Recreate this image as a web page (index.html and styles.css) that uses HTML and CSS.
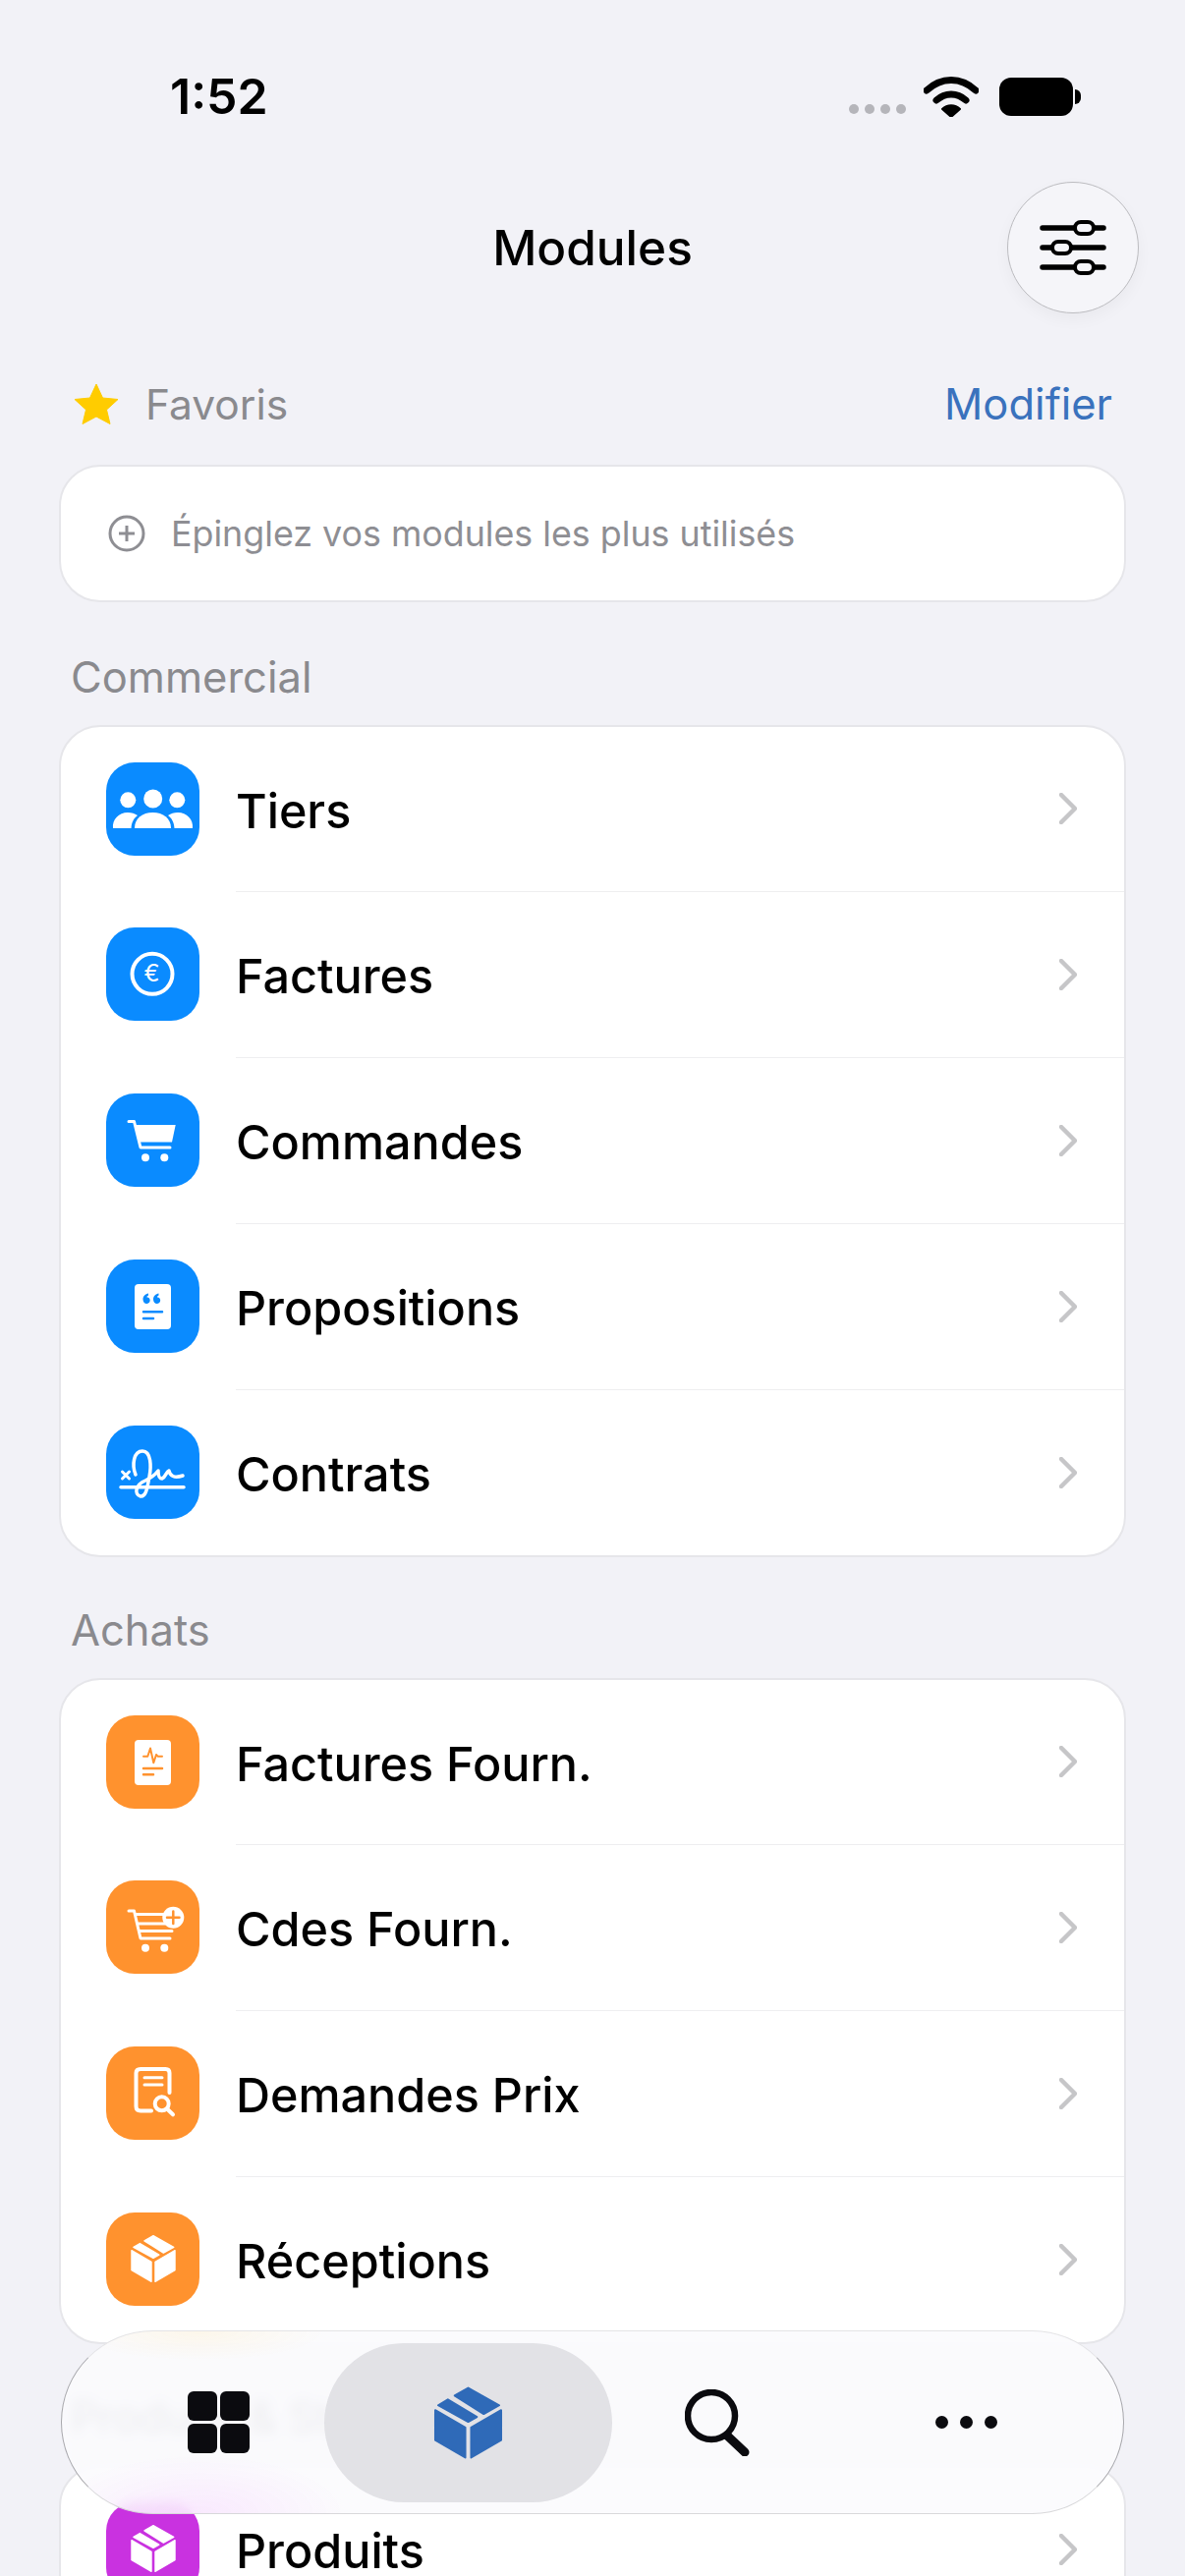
FILE: index.html
```html
<!DOCTYPE html>
<html lang="fr">
<head>
<meta charset="UTF-8">
<meta name="viewport" content="width=device-width, initial-scale=1">
<title>Modules</title>
<link rel="stylesheet" href="styles.css">
</head>
<body>
<svg class="sprites" width="0" height="0" aria-hidden="true">
  <symbol id="box" viewBox="-2 -2 74 78">
    <path d="M35 1 67 19 51 28 21 9Z"/>
    <path d="M14 13 44 31 35 36 4 19Z"/>
    <path d="M1 24 32 42V73L1 55Z"/>
    <path d="M38 42 69 24V55L38 73Z"/>
  </symbol>
  <symbol id="chevron" viewBox="0 0 18 32">
    <path d="M2 2 16 16 2 30"/>
  </symbol>
</svg>

<header class="status-bar">
  <span class="time">1:52</span>
  <div class="status-icons">
    <div class="signal-dots"><i></i><i></i><i></i><i></i></div>
    <svg class="wifi" viewBox="0 0 56 42"><path class="wifi-arc" d="M3 15C18 1 38 1 53 15"/><path class="wifi-arc" d="M13 25C22 17 34 17 43 25"/><path class="wifi-dot" d="M28 42 19 34C24 29 32 29 37 34Z"/></svg>
    <div class="battery"><div class="battery-body"></div><div class="battery-nub"></div></div>
  </div>
</header>

<nav class="nav">
  <h1>Modules</h1>
  <button class="filter-btn">
    <svg viewBox="0 0 66 50" width="66" height="50"><path class="slider-line" d="M2 5H64M2 25H64M2 45H64"/><rect class="slider-knob" x="35" y="-1" width="19" height="12" rx="6"/><rect class="slider-knob" x="12" y="19" width="19" height="12" rx="6"/><rect class="slider-knob" x="35" y="39" width="19" height="12" rx="6"/></svg>
  </button>
</nav>

<main>
  <div class="fav-head">
    <div class="fav-title">
      <svg class="star" viewBox="0 0 46 42"><path d="M23 1 29.500 15 45 16.500 33.500 27 37 41.500 23 34 9 41.500 12.500 27 1 16.500 16.500 15Z"/></svg>
      <span>Favoris</span>
    </div>
    <a class="edit-link" href="#">Modifier</a>
  </div>
  <div class="card fav-card">
    <svg class="plus-circle" viewBox="0 0 38 38"><circle cx="19" cy="19" r="17"/><path d="M19 11V27M11 19H27"/></svg>
    <span>Épinglez vos modules les plus utilisés</span>
  </div>

  <h2 class="section-label">Commercial</h2>
  <div class="card list-card">
    <a class="row" href="#">
      <span class="icon blue"><svg viewBox="0 0 95 95">
        <circle cx="47.700" cy="37" r="9.500"/><circle cx="22.300" cy="38.300" r="8"/><circle cx="72.300" cy="38.300" r="8"/>
        <path d="M29 66.700C29 57 37 51 47.500 51S66 57 66 66.700C66 67 65.500 67 65 67H30C29.500 67 29 67 29 66.700Z"/>
        <path d="M7 67C6 58 13 51 22 51 26 51 29 52 32 54 28 57 26 61 25.500 67Z"/>
        <path d="M88 67C89 58 82 51 73 51 69 51 66 52 63 54 67 57 69 61 69.500 67Z"/>
      </svg></span>
      <span class="row-body"><span class="row-label">Tiers</span><svg class="chevron"><use href="#chevron"/></svg></span>
    </a>
    <a class="row" href="#">
      <span class="icon blue"><svg viewBox="0 0 95 95">
        <circle class="line" cx="47" cy="47.300" r="20.500"/>
        <text class="euro" x="46.500" y="55">€</text>
      </svg></span>
      <span class="row-body"><span class="row-label">Factures</span><svg class="chevron"><use href="#chevron"/></svg></span>
    </a>
    <a class="row" href="#">
      <span class="icon blue"><svg viewBox="0 0 95 95">
        <path class="line thin" d="M23 28.500H28.500L35 55H65"/>
        <path d="M29.500 32H70.700L67 49.500H33.500Z"/>
        <circle cx="40" cy="65.300" r="4"/><circle cx="59.300" cy="65.300" r="4"/>
      </svg></span>
      <span class="row-body"><span class="row-label">Commandes</span><svg class="chevron"><use href="#chevron"/></svg></span>
    </a>
    <a class="row" href="#">
      <span class="icon blue"><svg viewBox="0 0 95 95">
        <rect x="29" y="25" width="37" height="46" rx="4"/>
        <path class="cut" d="M37.500 40.500C37.500 37 40 35 43 34.500V36.500C42 37 41.500 37.500 41.500 38.500 45.500 38 46 44.500 41.500 45 39 45 37.500 43 37.500 40.500ZM48 40.500C48 37 50.500 35 53.500 34.500V36.500C52.500 37 52 37.500 52 38.500 56 38 56.500 44.500 52 45 49.500 45 48 43 48 40.500Z"/>
        <path class="cut-line" d="M38 53.300H57M38 60H48"/>
      </svg></span>
      <span class="row-body"><span class="row-label">Propositions</span><svg class="chevron"><use href="#chevron"/></svg></span>
    </a>
    <a class="row" href="#">
      <span class="icon blue"><svg viewBox="0 0 95 95">
        <path class="line thick" d="M15 62.700H79"/>
        <path class="line thin" d="M16.500 47 23.500 54M23.500 47 16.500 54"/>
        <path class="line thick" d="M30 50C26 40 28 26 37 26 46 26 46 42 44 52 42 62 41 73 35 72 28 70 30 60 40 56 48 52 50 50 53 46 53 52 54 54 57 54 61 52 61 47 64 46 65 51 69 54 78 51"/>
      </svg></span>
      <span class="row-body"><span class="row-label">Contrats</span><svg class="chevron"><use href="#chevron"/></svg></span>
    </a>
  </div>

  <h2 class="section-label">Achats</h2>
  <div class="card list-card">
    <a class="row" href="#">
      <span class="icon orange"><svg viewBox="0 0 95 95">
        <rect x="29" y="25" width="37" height="46" rx="4"/>
        <path class="cut-line fine" d="M38 41.700H42.300L45 33.500 48.300 48.300 51 40 52.500 41.700H57"/>
        <path class="cut-line" d="M38 54H57M38 60.300H48"/>
      </svg></span>
      <span class="row-body"><span class="row-label">Factures Fourn.</span><svg class="chevron"><use href="#chevron"/></svg></span>
    </a>
    <a class="row" href="#">
      <span class="icon orange"><svg viewBox="0 0 95 95">
        <path class="line thin" d="M23 31H28.500L35 59H65M29.500 34.500H58M31.500 44H60M33.500 51.500H67"/>
        <circle cx="40" cy="68.700" r="4"/><circle cx="59.300" cy="68.700" r="4"/>
        <circle cx="68.300" cy="37.700" r="11"/>
        <path class="cut-line" d="M68.300 31.500V44M62 37.700H74.500"/>
      </svg></span>
      <span class="row-body"><span class="row-label">Cdes Fourn.</span><svg class="chevron"><use href="#chevron"/></svg></span>
    </a>
    <a class="row" href="#">
      <span class="icon orange"><svg viewBox="0 0 95 95">
        <path class="line" d="M64.500 47V27C64.500 24.500 63 23 60.500 23H35C32 23 30.500 24.500 30.500 27V61C30.500 64 32 65.500 35 65.500H46"/>
        <path class="line thin" d="M39 31.700H57M39 39H57"/>
        <circle class="line" cx="56.700" cy="58.300" r="7"/>
        <path class="line" d="M62 63.500 68 69.300"/>
      </svg></span>
      <span class="row-body"><span class="row-label">Demandes Prix</span><svg class="chevron"><use href="#chevron"/></svg></span>
    </a>
    <a class="row" href="#">
      <span class="icon orange"><svg class="box-small"><use href="#box"/></svg></span>
      <span class="row-body"><span class="row-label">Réceptions</span><svg class="chevron"><use href="#chevron"/></svg></span>
    </a>
  </div>

  <h2 class="section-label">Produits &amp; Stock</h2>
  <div class="card list-card">
    <a class="row" href="#">
      <span class="icon purple"><svg class="box-small"><use href="#box"/></svg></span>
      <span class="row-body"><span class="row-label">Produits</span><svg class="chevron"><use href="#chevron"/></svg></span>
    </a>
  </div>
</main>

<div class="tab-bar">
  <div class="tab">
    <div class="grid-icon"><i></i><i></i><i></i><i></i></div>
  </div>
  <div class="tab active">
    <svg class="box-large"><use href="#box"/></svg>
  </div>
  <div class="tab">
    <svg class="search-icon" viewBox="0 0 66 68"><circle cx="27" cy="27" r="24"/><path d="M43 47 61 64"/></svg>
  </div>
  <div class="tab">
    <div class="more-icon"><i></i><i></i><i></i></div>
  </div>
</div>
</body>
</html>
```

FILE: styles.css
```css
html, body {
  margin: 0;
  height: 2622px;
  overflow: hidden;
}
body {
  position: relative;
  background: #f2f2f7;
  font-family: Inter, "Liberation Sans", sans-serif;
  color: #000;
}
a {
  color: inherit;
  text-decoration: none;
}
.sprites {
  display: block;
}

/* status bar */
.status-bar {
  height: 185px;
  box-sizing: border-box;
  padding: 73px 106px 0 173px;
  display: flex;
  justify-content: space-between;
  align-items: flex-start;
}
.time {
  font-size: 50px;
  line-height: 50px;
  font-weight: 600;
}
.status-icons {
  display: flex;
  align-items: flex-start;
  padding-top: 4px;
}
.signal-dots {
  display: flex;
  gap: 6px;
  margin-top: 29px;
  margin-right: 18px;
}
.signal-dots i {
  width: 10px;
  height: 10px;
  border-radius: 50%;
  background: #b5b5ba;
}
.wifi {
  width: 56px;
  height: 42px;
  margin-right: 21px;
}
.wifi-arc {
  fill: none;
  stroke: #000;
  stroke-width: 7;
  stroke-linecap: round;
}
.wifi-dot {
  fill: #000;
  stroke: #000;
  stroke-width: 2;
  stroke-linejoin: round;
}
.battery {
  display: flex;
  align-items: center;
  gap: 2px;
  margin-top: 2px;
}
.battery-body {
  width: 75px;
  height: 39px;
  border-radius: 12px;
  background: #000;
}
.battery-nub {
  width: 6px;
  height: 15px;
  background: #000;
  border-radius: 0 8px 8px 0;
}

/* nav */
.nav {
  display: grid;
  grid-template-columns: 1fr auto 1fr;
  align-items: center;
  height: 134px;
}
.nav h1 {
  grid-column: 2;
  margin: 0;
  font-size: 49.500px;
  font-weight: 500;
}
.filter-btn {
  grid-column: 3;
  justify-self: end;
  margin-right: 47px;
  width: 134px;
  height: 134px;
  padding: 0;
  border: 1.5px solid #bcbcc0;
  border-radius: 50%;
  background: #f5f5f9;
  box-shadow: 0 6px 16px rgba(0, 0, 0, 0.04);
  display: flex;
  align-items: center;
  justify-content: center;
}
.filter-btn svg {
  overflow: visible;
}
.slider-line {
  fill: none;
  stroke: #000;
  stroke-width: 5.500;
  stroke-linecap: round;
}
.slider-knob {
  fill: #f5f5f9;
  stroke: #000;
  stroke-width: 4;
}

/* favoris */
.fav-head {
  display: flex;
  justify-content: space-between;
  align-items: center;
  height: 56px;
  margin-top: 64px;
  padding: 0 74px 0 75px;
}
.fav-title {
  display: flex;
  align-items: center;
  gap: 27px;
  font-size: 42.500px;
  color: #8a8a8e;
}
.star {
  width: 46px;
  height: 42px;
}
.star path {
  fill: #ffcc00;
  stroke: #ffcc00;
  stroke-width: 1;
  stroke-linejoin: round;
}
.edit-link {
  font-size: 43.500px;
  color: #3a72bd;
}
.card {
  margin: 0 60px;
  background: #fff;
  border: 2px solid #e6e6ea;
  border-radius: 42px;
}
.fav-card {
  box-sizing: border-box;
  height: 140px;
  margin-top: 34px;
  margin-bottom: 51px;
  padding-left: 48px;
  display: flex;
  align-items: center;
  gap: 26px;
  font-size: 35.800px;
  color: #8e8e93;
}
.plus-circle {
  width: 38px;
  height: 38px;
  fill: none;
  stroke: #8e8e93;
  stroke-width: 3;
}

/* module lists */
.section-label {
  margin: 0 0 24px;
  padding-left: 72px;
  height: 50px;
  line-height: 50px;
  font-size: 43.500px;
  font-weight: 400;
  color: #8a8a8e;
}
.list-card {
  margin-bottom: 49px;
}
.row {
  display: flex;
  align-items: center;
  height: 169px;
  padding-left: 46px;
}
.row:first-child,
.row:last-child {
  height: 168px;
}
.row-body {
  flex: 1;
  align-self: stretch;
  display: flex;
  align-items: center;
  margin-left: 37px;
  padding-right: 48px;
  border-bottom: 1.500px solid #eeeef0;
}
.row:last-child .row-body {
  border-bottom: 0;
}
.row-label {
  flex: 1;
  padding-top: 3px;
  font-size: 48.500px;
  font-weight: 450;
}
.chevron {
  flex: none;
  width: 18px;
  height: 32px;
  margin-top: -1px;
  fill: none;
  stroke: #c6c6c8;
  stroke-width: 4.500;
  stroke-linecap: round;
  stroke-linejoin: round;
}
.icon {
  flex: none;
  width: 95px;
  height: 95px;
  margin-top: -2px;
  border-radius: 29px;
  display: flex;
  align-items: center;
  justify-content: center;
  color: #fff;
}
.icon svg {
  width: 95px;
  height: 95px;
  fill: #fff;
}
.icon svg.box-small {
  width: 48px;
  height: 52px;
}
.blue {
  --tint: #0a8bff;
  background: #0a8bff;
}
.orange {
  --tint: #ff922e;
  background: #ff922e;
}
.purple {
  --tint: #c932e0;
  background: #c932e0;
}
.line {
  fill: none;
  stroke: #fff;
  stroke-width: 4;
  stroke-linecap: round;
  stroke-linejoin: round;
}
.thin {
  stroke-width: 3;
}
.thick {
  stroke-width: 3.500;
}
.cut {
  fill: var(--tint);
}
.cut-line {
  fill: none;
  stroke: var(--tint);
  stroke-width: 2.500;
  stroke-linecap: round;
  stroke-linejoin: round;
}
.fine {
  stroke-width: 2;
}
.euro {
  font-family: Inter, sans-serif;
  font-size: 24px;
  font-weight: 400;
  text-anchor: middle;
  fill: #fff;
}

/* floating tab bar */
.tab-bar {
  position: absolute;
  left: 62px;
  top: 2372px;
  width: 1082px;
  height: 187px;
  box-sizing: border-box;
  padding: 0 33px;
  display: grid;
  grid-template-columns: repeat(4, 1fr);
  align-items: center;
  border: 1px solid;
  border-color: #e4e4e6 #a8a8ac #d8d8da #a8a8ac;
  border-radius: 94px;
  background:
    radial-gradient(ellipse 150px 60px at 140px 100%, rgba(245, 200, 255, 0.35), transparent),
    radial-gradient(ellipse 130px 30px at 140px 0, rgba(255, 235, 190, 0.3), transparent),
    rgba(251, 251, 253, 0.88);
  backdrop-filter: blur(6px);
}
.tab {
  display: flex;
  align-items: center;
  justify-content: center;
  height: 162px;
}
.tab.active {
  margin: 0 -20px;
  border-radius: 81px;
  background: #e2e2e6;
}
.grid-icon {
  display: grid;
  grid-template-columns: 30px 30px;
  grid-auto-rows: 30px;
  gap: 3px;
}
.grid-icon i {
  border-radius: 6px;
  background: #0b0b0f;
}
.box-large {
  width: 73px;
  height: 78px;
  color: #2f6ab8;
}
#box path {
  fill: currentColor;
  stroke: currentColor;
  stroke-width: 2;
  stroke-linejoin: round;
}
.search-icon {
  width: 66px;
  height: 68px;
  fill: none;
  stroke: #0b0b0f;
  stroke-width: 6.500;
}
.search-icon path {
  stroke-width: 9;
  stroke-linecap: round;
}
.more-icon {
  display: flex;
  gap: 12px;
}
.more-icon i {
  width: 13px;
  height: 13px;
  border-radius: 50%;
  background: #0b0b0f;
}
```
